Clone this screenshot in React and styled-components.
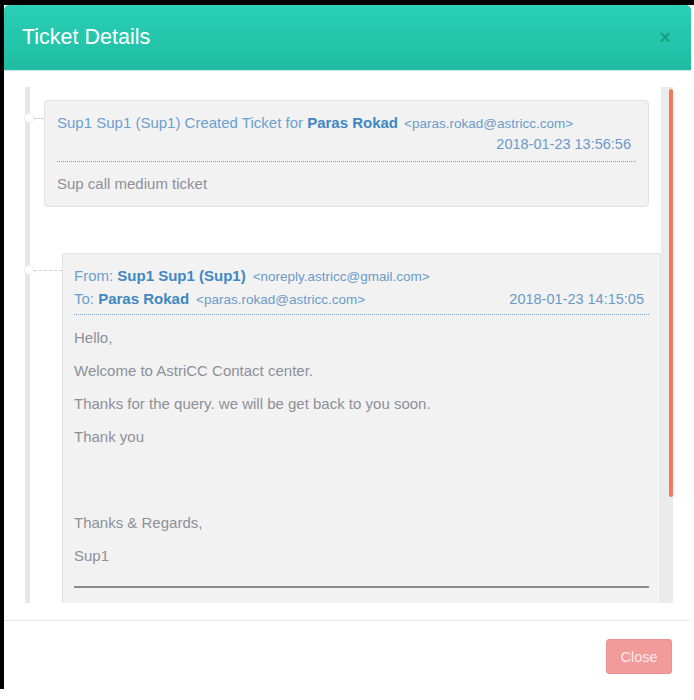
import styled, { createGlobalStyle } from 'styled-components';

const GlobalStyle = createGlobalStyle`
  html, body {
    margin: 0;
    background: #fff;
    font-family: "Liberation Sans", Arial, sans-serif;
  }
`;

const Frame = styled.div`
  width: 694px;
  height: 689px;
  box-sizing: border-box;
  border-top: 5px solid #000;
  border-left: 4px solid #000;
  padding-right: 3px;
`;

const Modal = styled.div`
  height: 100%;
  background: #fff;
  border-radius: 5px 5px 0 0;
  overflow: hidden;
  display: flex;
  flex-direction: column;
`;

const Header = styled.div`
  height: 66px;
  flex-shrink: 0;
  box-sizing: border-box;
  background: linear-gradient(#2ad0b6, #1fbda2);
  border-bottom: 1px solid #d2e8ef;
  display: flex;
  align-items: center;
  justify-content: space-between;
  padding: 0 20px 0 18px;
`;

const Title = styled.h4`
  margin: 0;
  color: #fff;
  font-size: 21.5px;
  font-weight: normal;
`;

const CloseX = styled.span`
  color: rgba(0, 0, 0, 0.22);
  font-size: 20px;
  font-weight: bold;
`;

const Body = styled.div`
  padding: 16px 18px 17px 20px;
  border-bottom: 1px solid #e6e6e6;
`;

const Scroller = styled.div`
  height: 516px;
  display: flex;
  overflow: hidden;
`;

const Timeline = styled.div`
  flex: 1;
  position: relative;
  padding: 13px 0 0 0;

  &::before {
    content: '';
    position: absolute;
    left: 1px;
    top: 0;
    bottom: 0;
    width: 5px;
    background: #e6e6e6;
  }
`;

const Entry = styled.div`
  position: relative;
  margin-left: ${p => p.$indent}px;
  margin-right: ${p => p.$right}px;
  margin-bottom: 46px;
`;

const Dot = styled.span`
  position: absolute;
  left: ${p => -p.$indent}px;
  top: ${p => p.$top}px;
  width: 10px;
  height: 10px;
  border-radius: 50%;
  background: #fff;
  border: 1px solid #ececec;
  box-sizing: border-box;
  z-index: 1;

  &::after {
    content: '';
    position: absolute;
    left: 9px;
    top: 4px;
    width: ${p => p.$indent - 10}px;
    border-top: 1px dashed #cfcfcf;
  }
`;

const Card = styled.div`
  background: #f2f2f2;
  border: 1px solid #e2e2e2;
  border-radius: ${p => (p.$square ? '2px' : '4px')};
  padding: ${p => p.$pad};
`;

const Meta = styled.div`
  color: #6c9fcf;
  font-size: 15px;
  line-height: ${p => p.$lh || 20}px;
`;

const Name = styled.b`
  color: #3f88c3;
`;

const Email = styled.span`
  color: #6a9bc9;
  font-size: 13.5px;
  margin-left: ${p => p.$gap || 4}px;
`;

const MetaRow = styled.div`
  display: flex;
  justify-content: space-between;
  align-items: baseline;
`;

const Stamp = styled.span`
  color: #6b9ac6;
  font-size: 14.5px;
  padding-right: 5px;
  margin-left: auto;
`;

const Divider = styled.div`
  border-top: 1px dotted #7aa3c8;
  margin: ${p => p.$m};
`;

const Text = styled.p`
  margin: 0 0 13px;
  color: #8d9099;
  font-size: 15px;
  line-height: 20px;
`;

const Gap = styled.div`
  height: 40px;
  margin-bottom: 13px;
`;

const Rule = styled.hr`
  border: 0;
  border-top: 2px solid #8b8b8b;
  margin: 20px 0 60px;
`;

const Track = styled.div`
  width: 12px;
  flex-shrink: 0;
  background: #ebebeb;
  display: flex;
  justify-content: flex-end;
  padding-top: 2px;
`;

const Thumb = styled.div`
  width: 4px;
  height: 408px;
  background: #f2785c;
  border-radius: 2px;
`;

const Footer = styled.div`
  flex: 1;
  display: flex;
  justify-content: flex-end;
  align-items: flex-start;
  padding: 18px 19px 0 0;
`;

const Button = styled.button`
  background: #f19b9a;
  border: 1px solid #ea9090;
  border-radius: 3px;
  color: #fbe9e9;
  font-family: "Liberation Sans", Arial, sans-serif;
  font-size: 14.5px;
  width: 66px;
  height: 35px;
  padding: 0;
`;

export default function App() {
  return (
    <>
      <GlobalStyle />
      <Frame>
        <Modal>
          <Header>
            <Title>Ticket Details</Title>
            <CloseX>×</CloseX>
          </Header>
          <Body>
            <Scroller>
              <Timeline>
                <Entry $indent={20} $right={12}>
                  <Dot $indent={20} $top={13} />
                  <Card $pad="12px 12px 12px 12px">
                    <Meta>
                      Sup1 Sup1 (Sup1) Created Ticket for <Name>Paras Rokad</Name>
                      <Email $gap={6}>&lt;paras.rokad@astricc.com&gt;</Email>
                    </Meta>
                    <Meta>
                      <MetaRow>
                        <Stamp>2018-01-23 13:56:56</Stamp>
                      </MetaRow>
                    </Meta>
                    <Divider $m="7px 0 12px" />
                    <Text style={{ margin: 0 }}>Sup call medium ticket</Text>
                  </Card>
                </Entry>
                <Entry $indent={38} $right={0}>
                  <Dot $indent={38} $top={12} />
                  <Card $square $pad="11px 11px 0 11px">
                    <Meta $lh={22}>
                      From: <Name>Sup1 Sup1 (Sup1)</Name>
                      <Email $gap={7}>&lt;noreply.astricc@gmail.com&gt;</Email>
                    </Meta>
                    <Meta $lh={22}>
                      <MetaRow>
                        <span>
                          To: <Name>Paras Rokad</Name>
                          <Email $gap={7}>&lt;paras.rokad@astricc.com&gt;</Email>
                        </span>
                        <Stamp>2018-01-23 14:15:05</Stamp>
                      </MetaRow>
                    </Meta>
                    <Divider $m="3px 0 13px" />
                    <Text>Hello,</Text>
                    <Text>Welcome to AstriCC Contact center.</Text>
                    <Text>Thanks for the query. we will be get back to you soon.</Text>
                    <Text>Thank you</Text>
                    <Gap />
                    <Text>Thanks &amp; Regards,</Text>
                    <Text>Sup1</Text>
                    <Rule />
                  </Card>
                </Entry>
              </Timeline>
              <Track>
                <Thumb />
              </Track>
            </Scroller>
          </Body>
          <Footer>
            <Button>Close</Button>
          </Footer>
        </Modal>
      </Frame>
    </>
  );
}
